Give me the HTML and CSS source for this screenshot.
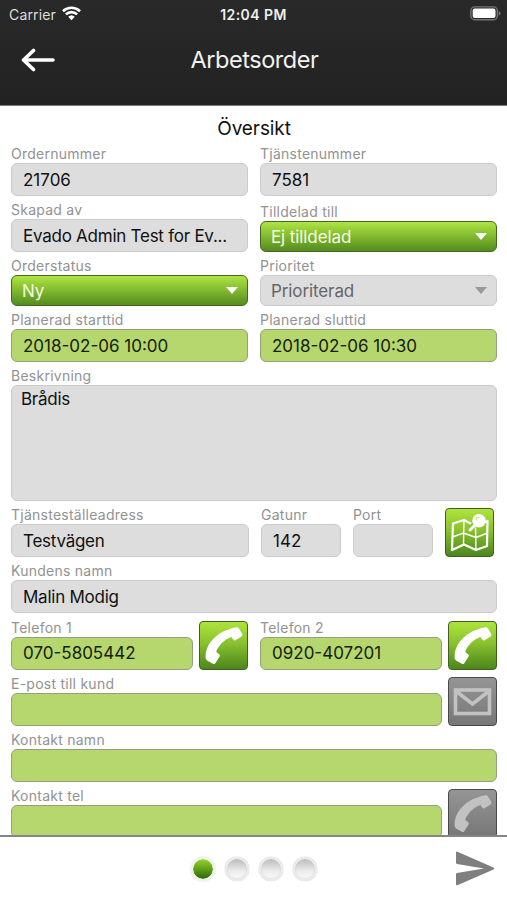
FILE: index.html
```html
<!DOCTYPE html>
<html lang="sv">
<head>
<meta charset="utf-8">
<title>Arbetsorder</title>
<link rel="stylesheet" href="styles.css">
</head>
<body>
<svg class="defs" width="0" height="0" aria-hidden="true">
  <symbol id="phone" viewBox="0 0 50 50">
    <path fill="currentColor" d="M29.5 8.6Q33.5 6.6 37.5 6.2 39 6 40 7.4L43.2 12.8Q44 14.4 42.5 15.4L36.6 19.2Q35.2 20 34.2 18.5L32.4 16C26 18 19 24.5 17.2 31L20.2 33.2Q21.3 34.2 20.6 35.6L16.3 42.2Q15.3 43.6 13.8 42.8L8.1 39.5Q6.6 38.5 6.6 36.7L6.8 31.5C9 20.5 19.5 11.5 29.5 8.6Z"/>
  </symbol>
</svg>
<div class="app">
  <header class="top">
    <div class="status">
      <span class="carrier">Carrier</span>
      <svg class="wifi" width="19" height="15" viewBox="0 0 19 15"><g fill="none" stroke="#fff" stroke-width="2.6"><path d="M1 5.2A12.3 12.3 0 0 1 18 5.2"/><path d="M3.9 8.4A8.1 8.1 0 0 1 15.1 8.4"/></g><path fill="#fff" d="M6.2 10.8A4.8 4.8 0 0 1 12.8 10.8L9.5 14.2Z"/></svg>
      <span class="clock">12:04 PM</span>
      <svg class="battery" width="31" height="15" viewBox="0 0 31 15"><rect x=".9" y=".9" width="26.4" height="12.8" rx="3.8" fill="none" stroke="#747474" stroke-width="1.4"/><rect x="2.7" y="2.6" width="22.8" height="9.4" rx="2" fill="#fff"/><path fill="#747474" d="M28.6 4.8Q30.6 5.8 30.6 7.3T28.6 9.8Z"/></svg>
    </div>
    <div class="nav">
      <svg class="back" width="34" height="24" viewBox="0 0 34 24" fill="none" stroke="#fff" stroke-width="3.6" stroke-linecap="round" stroke-linejoin="round"><path d="M2.5 12H32M12.5 2.5 2.5 12 12.5 21.5"/></svg>
      <h1>Arbetsorder</h1>
    </div>
  </header>

  <main class="form">
    <h2>Översikt</h2>
    <div class="row">
      <label class="cell"><span>Ordernummer</span><b class="field">21706</b></label>
      <label class="cell"><span>Tjänstenummer</span><b class="field">7581</b></label>
    </div>
    <div class="row">
      <label class="cell"><span>Skapad av</span><b class="field text">Evado Admin Test for Ev...</b></label>
      <label class="cell"><span>Tilldelad till</span><b class="select on">Ej tilldelad<i></i></b></label>
    </div>
    <div class="row tight">
      <label class="cell"><span>Orderstatus</span><b class="select on">Ny<i></i></b></label>
      <label class="cell"><span>Prioritet</span><b class="select">Prioriterad<i></i></b></label>
    </div>
    <div class="row">
      <label class="cell"><span>Planerad starttid</span><b class="field edit">2018-02-06 10:00</b></label>
      <label class="cell"><span>Planerad sluttid</span><b class="field edit">2018-02-06 10:30</b></label>
    </div>
    <div class="row tall">
      <label class="cell"><span>Beskrivning</span><b class="field text area">Brådis</b></label>
    </div>
    <div class="row address">
      <label class="cell street"><span>Tjänsteställeadress</span><b class="field text">Testvägen</b></label>
      <label class="cell"><span>Gatunr</span><b class="field">142</b></label>
      <label class="cell"><span>Port</span><b class="field"></b></label>
      <div class="btn on"><svg width="49" height="49" viewBox="0 0 49 49"><g fill="none" stroke="#fff" stroke-width="2.2" stroke-linejoin="round"><path d="M8 15.5 19 12 30 18 42.5 13 42 38 31 42 19 36.5 7 42Z"/><path stroke-width="1.4" d="M19 12 18.5 36M30.5 18 31 42M7.5 29 18.5 25 31 29.5 42.5 25"/></g><path stroke="#8cc52f" stroke-width="6" d="M30 16 24 22"/><path stroke="#fff" stroke-width="3" stroke-linecap="round" d="M30 17 25 22"/><circle cx="34" cy="12.8" r="6.8" fill="#fff"/><path fill="none" stroke="#b9da80" stroke-width="1.1" d="M30.8 12Q31.6 9.4 34 9"/></svg></div>
    </div>
    <div class="row">
      <label class="cell"><span>Kundens namn</span><b class="field text">Malin Modig</b></label>
    </div>
    <div class="row phones">
      <label class="cell"><span>Telefon 1</span><b class="field edit">070-5805442</b></label>
      <div class="btn on"><svg width="50" height="50"><use href="#phone"/></svg></div>
      <label class="cell second"><span>Telefon 2</span><b class="field edit">0920-407201</b></label>
      <div class="btn on"><svg width="50" height="50"><use href="#phone"/></svg></div>
    </div>
    <div class="row with-btn">
      <label class="cell"><span>E-post till kund</span><b class="field edit"></b></label>
      <div class="btn"><svg width="49" height="49" viewBox="0 0 49 49" fill="none" stroke="#c2c2c2"><rect x="7.5" y="13" width="34" height="23.5" stroke-width="3.6"/><path stroke-width="3.6" d="M8.5 14.5 24.5 27 40.5 14.5"/></svg></div>
    </div>
    <div class="row">
      <label class="cell"><span>Kontakt namn</span><b class="field edit"></b></label>
    </div>
    <div class="row with-btn">
      <label class="cell"><span>Kontakt tel</span><b class="field edit"></b></label>
      <div class="btn"><svg width="50" height="50"><use href="#phone"/></svg></div>
    </div>
  </main>

  <footer class="bottom">
    <div class="dots"><i class="active"></i><i></i><i></i><i></i></div>
    <svg class="send" width="40" height="35" viewBox="0 0 40 35"><path fill="#7f7f7f" d="M1 1.6Q1 .2 2.4.7L38.5 16.5Q40 17.5 38.5 18.4L2.4 34.2Q1 34.7 1 33.3V23.3Q1 22.2 2 22L29 17.5 2 13Q1 12.8 1 11.7Z"/></svg>
  </footer>
</div>
</body>
</html>
```
FILE: styles.css
```css
* { box-sizing: border-box; }
body { margin: 0; background: #fff; font-family: Inter, "Liberation Sans", sans-serif; }
.defs { display: block; }
.app { width: 507px; height: 900px; display: flex; flex-direction: column; overflow: hidden; }

.top { height: 106px; flex: none; background: linear-gradient(#292929, #222); border-bottom: 1px solid #777; color: #fff; }
.status { height: 28px; display: grid; grid-template-columns: auto auto 1fr auto; align-items: center; padding: 0 6px 0 9px; position: relative; }
.carrier { font-size: 14px; color: #dedede; letter-spacing: .15px; }
.wifi { margin: -2px 0 0 6px; }
.clock { position: absolute; left: 0; right: 0; text-align: center; font-size: 14px; font-weight: 600; color: #f0f0f0; letter-spacing: .45px; }
.battery { grid-column: 4; margin-top: -1px; }
.nav { height: 64px; display: grid; grid-template-columns: 80px 1fr 78px; align-items: center; }
.back { margin-left: 21px; }
h1 { margin: -1px 0 0; text-align: center; font-size: 23.5px; font-weight: 400; letter-spacing: -.45px; color: #f2f2f2; }

.form { flex: 1; min-height: 0; overflow: hidden; padding: 0 10px 0 11px; }
h2 { margin: 0; height: 34px; line-height: 45px; text-align: center; font-size: 19px; font-weight: 400; color: #111; letter-spacing: -.1px; }
.row { height: 56px; display: flex; align-items: flex-end; gap: 12px; }
.row.tight { height: 54px; }
.row.tall { height: 139px; }
.row.phones { height: 56.6px; }
.cell { flex: 1; min-width: 0; display: flex; flex-direction: column; }
.cell span { height: 18px; line-height: 18px; font-size: 14px; color: #929292; white-space: nowrap; letter-spacing: .25px; }
.field, .select { display: flex; align-items: center; height: 33px; padding: 0 11px; border: 1px solid #cbcbcb; border-radius: 6px; background: #ddd; font-size: 17px; font-weight: 400; color: #111; white-space: nowrap; }
.text { letter-spacing: -.25px; }
.edit { background: #b5d76d; border: 1.5px solid #92a17b; color: #15200a; }
.area { height: 116px; align-items: flex-start; padding: 3px 9px; }
.select { height: 31px; padding: 0 9px 0 10px; color: #666; justify-content: space-between; letter-spacing: -.1px; }
.select i { border: 6px solid transparent; border-top: 7px solid #999; border-bottom: 0; }
.select.on { color: #f5ffe0; border-color: #46661f; background: linear-gradient(#afe544, #85bd30 45%, #548b20); }
.select.on i { border-top-color: #fff; }

.btn { width: 49px; height: 49px; flex: none; border: 1px solid #494949; border-radius: 4px; background: linear-gradient(#959595, #777); color: #c2c2c2; overflow: hidden; }
.btn svg { display: block; margin: -1px; }
.btn.on { border-color: #41601f; background: linear-gradient(#afe33d, #88c22d 45%, #4c861d); color: #fff; }
.address { padding-right: 3px; }
.address .street { flex: 0 0 238px; }
.row.phones, .row.with-btn { gap: 6px; }
.phones .second { margin-left: 6px; }

.bottom { height: 65px; flex: none; border-top: 2px solid #858585; background: #fff; display: grid; grid-template-columns: 80px 1fr 80px; align-items: center; }
.dots { grid-column: 2; display: flex; justify-content: center; gap: 10px; }
.dots i { width: 24px; height: 24px; border-radius: 50%; border: 2.5px solid #ebebeb; background: linear-gradient(#bcbcbc, #ececec 60%, #fafafa) padding-box; box-shadow: inset 0 0 1px #999, 0 0 1px #999; }
.dots i.active { border: 2px solid #eef2ea; background: linear-gradient(#98d729, #5a9a17 55%, #2e640b) padding-box; box-shadow: 0 0 2px #ccc; }
.send { margin-left: 28px; }
```
